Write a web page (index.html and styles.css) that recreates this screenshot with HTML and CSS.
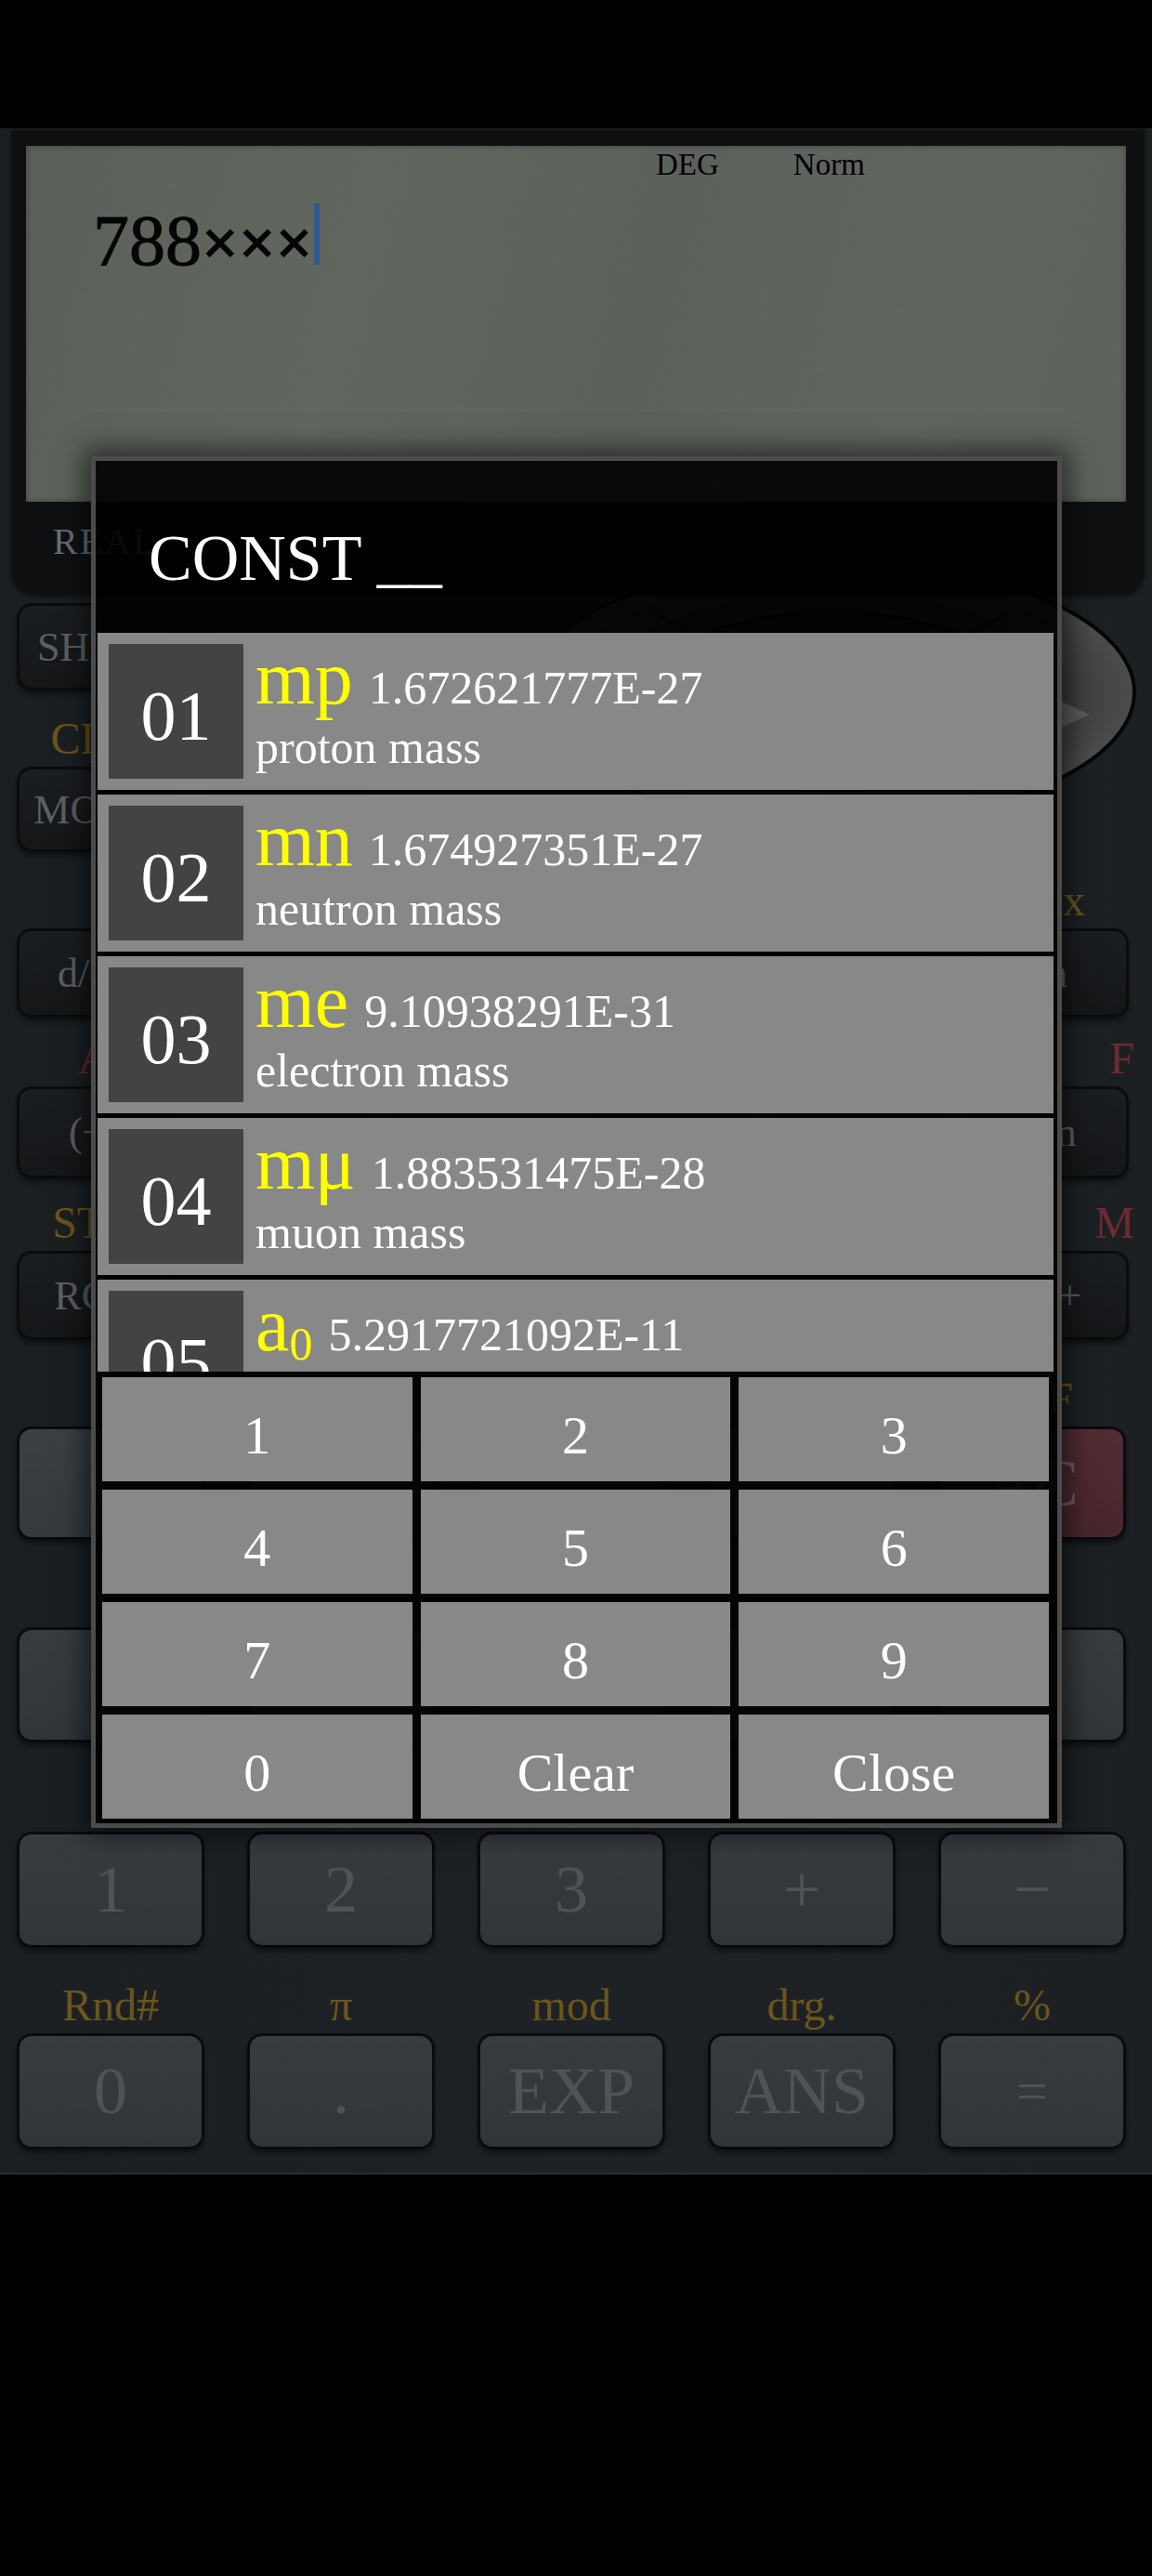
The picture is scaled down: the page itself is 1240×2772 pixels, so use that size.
FILE: index.html
```html
<!DOCTYPE html>
<html lang="en">
<head>
<meta charset="utf-8">
<title>Calculator - CONST</title>
<link rel="stylesheet" href="styles.css">
</head>
<body>
<div class="screen">
  <div class="statusbar"></div>
  <div class="calc">
    <div class="bezel">
      <div class="lcd">
        <div class="indicators"><span>DEG</span><span>Norm</span></div>
        <div class="expr">788<span class="times">×××</span><span class="cursor"></span></div>
      </div>
      <div class="mode-label">REAL</div>
    </div>

    <svg class="dpad" viewBox="0 0 660 290" width="660" height="290">
      <defs>
        <radialGradient id="dg" cx="50%" cy="50%" r="50%">
          <stop offset="0.55" stop-color="#2a2c2e"/>
          <stop offset="1" stop-color="#4b4c4d"/>
        </radialGradient>
      </defs>
      <ellipse cx="330" cy="145" rx="326" ry="141" fill="url(#dg)" stroke="#050606" stroke-width="4"/>
      <ellipse cx="330" cy="150" rx="200" ry="92" fill="#232527" stroke="#0a0b0c" stroke-width="3"/>
      <line x1="140" y1="60" x2="230" y2="110" stroke="#0a0b0c" stroke-width="3"/>
      <line x1="520" y1="60" x2="430" y2="110" stroke="#0a0b0c" stroke-width="3"/>
      <polygon points="577,155 608,169 577,183" fill="#5b5c5d"/>
    </svg>

    <div class="row6 row-shift">
      <div class="key dark">SHIFT</div>
      <div class="key dark"></div>
    </div>
    <div class="labels6 lab-mode">
      <div class="lab"><span class="g">CLR</span></div>
    </div>
    <div class="row6 row-mode">
      <div class="key dark">MODE</div>
      <div class="key dark"></div>
    </div>

    <div class="labels6 lab-a">
      <div class="lab"></div><div class="lab"></div><div class="lab"></div>
      <div class="lab"></div><div class="lab"></div>
      <div class="lab"><span class="g">10<span class="sup">x</span></span></div>
    </div>
    <div class="row6 row-a">
      <div class="key dark">d/dx</div>
      <div class="key dark"></div>
      <div class="key dark"></div>
      <div class="key dark"></div>
      <div class="key dark"></div>
      <div class="key dark">ln</div>
    </div>

    <div class="labels6 lab-b">
      <div class="lab"><span class="r">A</span></div>
      <div class="lab"></div><div class="lab"></div><div class="lab"></div><div class="lab"></div>
      <div class="lab end"><span class="r">F</span></div>
    </div>
    <div class="row6 row-b">
      <div class="key dark">(−)</div>
      <div class="key dark"></div>
      <div class="key dark"></div>
      <div class="key dark"></div>
      <div class="key dark"></div>
      <div class="key dark">tan</div>
    </div>

    <div class="labels6 lab-c">
      <div class="lab"><span class="g">STO</span></div>
      <div class="lab"></div><div class="lab"></div><div class="lab"></div><div class="lab"></div>
      <div class="lab end"><span class="r">M</span></div>
    </div>
    <div class="row6 row-c">
      <div class="key dark">RCL</div>
      <div class="key dark"></div>
      <div class="key dark"></div>
      <div class="key dark"></div>
      <div class="key dark"></div>
      <div class="key dark">M+</div>
    </div>

    <div class="labels5 lab-d">
      <div class="lab"></div><div class="lab"></div><div class="lab"></div><div class="lab"></div>
      <div class="lab"><span class="g">OFF</span></div>
    </div>
    <div class="row5 row-d">
      <div class="key light"></div>
      <div class="key"></div>
      <div class="key"></div>
      <div class="key"></div>
      <div class="key red">AC</div>
    </div>

    <div class="labels5 lab-e"></div>
    <div class="row5 row-e">
      <div class="key"></div>
      <div class="key"></div>
      <div class="key"></div>
      <div class="key"></div>
      <div class="key"></div>
    </div>

    <div class="labels5 lab-f"></div>
    <div class="row5 row-f">
      <div class="key">1</div>
      <div class="key">2</div>
      <div class="key">3</div>
      <div class="key">+</div>
      <div class="key">−</div>
    </div>

    <div class="labels5 lab-g">
      <div class="lab"><span class="g">Rnd#</span></div>
      <div class="lab"><span class="g">π</span></div>
      <div class="lab"><span class="g">mod</span></div>
      <div class="lab"><span class="g">drg.</span></div>
      <div class="lab"><span class="g">%</span></div>
    </div>
    <div class="row5 row-g">
      <div class="key">0</div>
      <div class="key">.</div>
      <div class="key">EXP</div>
      <div class="key">ANS</div>
      <div class="key eq">=</div>
    </div>
  </div>

  <div class="dialog">
    <div class="dlg-title">CONST __</div>
    <div class="const-list">
      <div class="item">
        <div class="num">01</div>
        <div class="info">
          <div class="l1"><span class="sym">mp</span><span class="val">1.672621777E-27</span></div>
          <div class="l2">proton mass</div>
        </div>
      </div>
      <div class="item">
        <div class="num">02</div>
        <div class="info">
          <div class="l1"><span class="sym">mn</span><span class="val">1.674927351E-27</span></div>
          <div class="l2">neutron mass</div>
        </div>
      </div>
      <div class="item">
        <div class="num">03</div>
        <div class="info">
          <div class="l1"><span class="sym">me</span><span class="val">9.10938291E-31</span></div>
          <div class="l2">electron mass</div>
        </div>
      </div>
      <div class="item">
        <div class="num">04</div>
        <div class="info">
          <div class="l1"><span class="sym">mμ</span><span class="val">1.883531475E-28</span></div>
          <div class="l2">muon mass</div>
        </div>
      </div>
      <div class="item">
        <div class="num">05</div>
        <div class="info">
          <div class="l1"><span class="sym">a<span class="sub">0</span></span><span class="val">5.2917721092E-11</span></div>
          <div class="l2">Bohr radius</div>
        </div>
      </div>
    </div>
    <div class="keypad">
      <div class="pk">1</div>
      <div class="pk">2</div>
      <div class="pk">3</div>
      <div class="pk">4</div>
      <div class="pk">5</div>
      <div class="pk">6</div>
      <div class="pk">7</div>
      <div class="pk">8</div>
      <div class="pk">9</div>
      <div class="pk">0</div>
      <div class="pk">Clear</div>
      <div class="pk">Close</div>
    </div>
  </div>
</div>
</body>
</html>
```

FILE: styles.css
```css
* { box-sizing: border-box; }
html, body { margin: 0; padding: 0; }
body {
  background: #000;
  font-family: "Liberation Serif", "Times New Roman", serif;
  width: 1240px;
  height: 2772px;
  overflow: hidden;
}
.screen { position: relative; width: 1240px; height: 2772px; }
.statusbar { height: 138px; background: #000; }

.calc {
  position: relative;
  height: 2202px;
  background: linear-gradient(90deg, #1b1f22 0%, #1e2226 50%, #1c2023 100%);
  border-bottom: 2px solid #2a2d30;
}

/* display */
.bezel {
  position: relative;
  z-index: 2;
  height: 502px;
  margin: 0 8px 0 12px;
  padding: 19px 20px 0 16px;
  background: #0e1012;
  border-radius: 0 0 26px 26px;
  box-shadow: inset 0 2px 3px rgba(255,255,255,0.05), 0 2px 4px rgba(0,0,0,0.6);
}
.lcd {
  height: 383px;
  background: linear-gradient(105deg, #5b605a 0%, #61665f 30%, #5c615b 55%, #60655f 80%, #5d625c 100%);
  box-shadow: inset 0 0 6px rgba(0,0,0,0.35);
}
.indicators {
  display: flex;
  padding: 4px 0 0 678px;
  font-size: 33px;
  line-height: 33px;
  color: #000;
}
.indicators span + span { margin-left: 80px; }
.expr {
  margin-top: 25px;
  padding-left: 72px;
  font-size: 78px;
  line-height: 80px;
  color: #050505;
  white-space: nowrap;
  -webkit-text-stroke: 1px #050505;
}
.times { font-size: 70px; font-weight: bold; }
.cursor {
  display: inline-block;
  width: 6px;
  height: 66px;
  margin-left: 1px;
  background: #2d5b95;
}
.mode-label {
  margin-top: 23px;
  padding-left: 29px;
  font-size: 40px;
  line-height: 40px;
  color: #6a6d72;
  letter-spacing: 2px;
}

.dpad {
  position: absolute;
  left: 565px;
  top: 462px;
  z-index: 1;
}

/* key rows */
.row6, .labels6 {
  display: grid;
  grid-template-columns: repeat(6, 1fr);
  column-gap: 40px;
  padding: 0 25px 0 18px;
}
.row5, .labels5 {
  display: grid;
  grid-template-columns: repeat(5, 1fr);
  column-gap: 46px;
  padding: 0 28px 0 18px;
}
.labels6, .labels5 { align-items: end; }

.row-shift { height: 94px; margin-top: 9px; }
.lab-mode { height: 82px; }
.row-mode { height: 92px; }
.lab-a { height: 82px; }
.row-a { height: 96px; }
.lab-b { height: 74px; }
.row-b { height: 99px; }
.lab-c { height: 78px; }
.row-c { height: 96px; }
.lab-d { height: 93px; }
.row-d { height: 122px; }
.lab-e { height: 94px; }
.row-e { height: 124px; }
.lab-f { height: 96px; }
.row-f { height: 125px; }
.lab-g { height: 92px; }
.row-g { height: 125px; }

.key {
  display: flex;
  align-items: center;
  justify-content: center;
  border: 3px solid #0a0b0c;
  border-radius: 16px;
  background: linear-gradient(#383c40, #313539);
  box-shadow: 0 4px 5px rgba(0,0,0,0.45);
  color: #4f5357;
  font-size: 72px;
  white-space: nowrap;
  overflow: hidden;
}
.key.light { background: linear-gradient(#3c4044, #35393d); }
.key.dark {
  background: linear-gradient(#1b1e21, #141618);
  color: #5c6065;
  font-size: 44px;
}
.key.red {
  background: linear-gradient(#522b33, #48262d);
  color: #6c5a60;
}
.key.eq { font-size: 60px; }

.lab {
  display: flex;
  justify-content: center;
  padding-bottom: 6px;
  font-size: 48px;
  line-height: 48px;
  white-space: nowrap;
}
.lab.end { justify-content: flex-end; margin-right: -6px; }
.g { color: #6b551b; }
.r { color: #6e2b31; }
.sup { font-size: 48px; }

/* dialog */
.dialog {
  position: absolute;
  left: 98px;
  top: 491px;
  z-index: 10;
  width: 1045px;
  height: 1476px;
  display: flex;
  flex-direction: column;
  border: 5px solid #4b4b4b;
  background: rgba(0,0,0,0.9);
  box-shadow: 0 0 26px 8px rgba(0,0,0,0.55);
}
.dlg-title {
  flex: 0 0 185px;
  padding: 70px 0 0 57px;
  font-size: 70px;
  line-height: 70px;
  color: #fff;
  white-space: pre;
}
.const-list {
  flex: 0 0 795px;
  height: 795px;
  margin: 0 4px 0 2px;
  display: flex;
  flex-direction: column;
  gap: 5px;
  overflow: hidden;
}
.item {
  flex: 0 0 169px;
  height: 169px;
  display: flex;
  padding: 12px;
  background: #888;
  overflow: hidden;
}
.num {
  flex: 0 0 145px;
  height: 145px;
  display: flex;
  align-items: center;
  justify-content: center;
  padding-top: 10px;
  background: #434343;
  color: #fff;
  font-size: 76px;
}
.info {
  margin-left: 13px;
  color: #fff;
  white-space: nowrap;
}
.l1 { font-size: 82px; line-height: 74px; }
.sym { color: #ffff00; }
.sub { font-size: 50px; line-height: 0; vertical-align: -10px; }
.val { font-size: 50px; line-height: 50px; margin-left: 17px; }
.l2 { font-size: 50px; line-height: 74px; }

.keypad {
  flex: 0 0 475px;
  height: 475px;
  margin: 6px 9px 0 7px;
  display: grid;
  grid-template-columns: repeat(3, 1fr);
  grid-template-rows: repeat(4, 1fr);
  gap: 9px;
}
.pk {
  display: flex;
  align-items: center;
  justify-content: center;
  padding-top: 12px;
  background: #888;
  color: #fff;
  font-size: 58px;
}
```
